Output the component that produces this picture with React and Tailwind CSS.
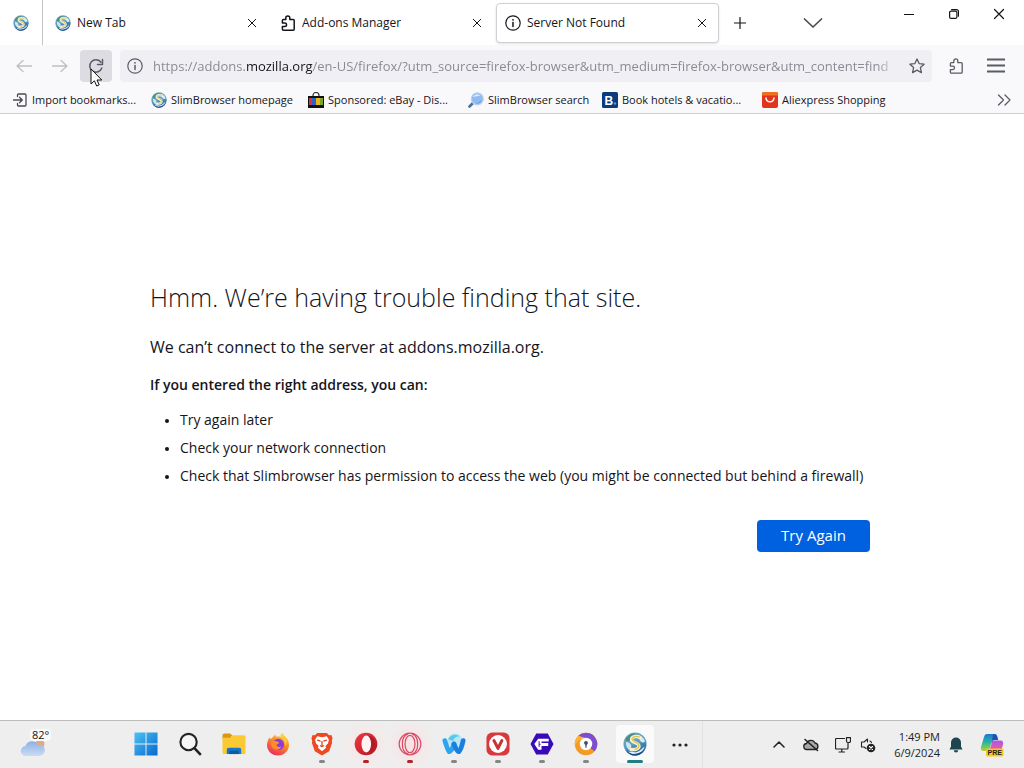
import React from "react";

const stroke = { fill: "none", stroke: "currentColor", strokeLinecap: "round", strokeLinejoin: "round" };

function Globe({ className, id }) {
  return (
    <svg className={className} viewBox="0 0 24 24" aria-hidden="true">
      <defs>
        <linearGradient id={id} x1="0.2" y1="0" x2="0.6" y2="1">
          <stop offset="0" stopColor="#6fa9b8" />
          <stop offset="0.5" stopColor="#5d9fc4" />
          <stop offset="1" stopColor="#1d5590" />
        </linearGradient>
      </defs>
      <circle cx="12" cy="12" r="11.500" fill={`url(#${id})`} />
      <path d="M2.500 8C4 4 8 1.500 12 1.500 11.500 4 8 5 7 7.500S4 9 2.500 8z" fill="#4a8d7d" />
      <path d="M15 3c3 .5 6 3 7 6.500-2 2-4 .5-5-1s-2-3-2-5.500z" fill="#d7ebf2" />
      <path d="M3 10c2 0 4 1 5 3s-1 4-2 5c-2-2-3.500-5-3-8z" fill="#cfe5f1" />
      <path d="M16 13c2-2 4-1.500 6-1 0 3-1.500 5.500-3.500 7.500-1.500-1-3-4-2.500-6.500z" fill="#3d83a8" />
      <path d="M5 20c5-1 6 1 9 0s5-3 7.500-5.500c-1 5-5 8-9.500 8-3 0-5-1-7-2.500z" fill="#e6f1f8" />
      <path d="M3 18c4 4 7 4.500 11 3.500 3-.8 5-2 7-4.500-2 4.500-5.500 6.500-9 6.500-4 0-7-2-9-5.500z" fill="#164a86" />
      <path d="M17 5.500c-3-1.500-8.500-1.500-8.500 2 0 3.500 7.500 3 7.500 6.500 0 3-4 4-8 3.500" fill="none" stroke="#f6f2d2" strokeWidth="3.400" strokeLinecap="round" />
      <path d="M16.500 5c-3-1-7.500-.5-7.500 2.200 0 3 7.500 3 7 6.800-.3 2-2 3-4 3.300" fill="none" stroke="#e0c555" strokeWidth="1.300" strokeLinecap="round" />
    </svg>
  );
}

function Puzzle({ className, width = 1.5 }) {
  return (
    <svg className={className} viewBox="0 0 16 16" {...stroke} strokeWidth={width} aria-hidden="true">
      <path d="M5.800 4.600V2.900a2 2 0 0 1 4 0v1.700h3.400a1 1 0 0 1 1 1v8.600a1 1 0 0 1-1 1H3.400a1 1 0 0 1-1-1v-2.600h2.400a1.700 1.700 0 0 0 0-3.500H2.400V5.600a1 1 0 0 1 1-1z" />
    </svg>
  );
}

function Info({ className }) {
  return (
    <svg className={className} viewBox="0 0 16 16" {...stroke} strokeWidth="1.200" aria-hidden="true">
      <circle cx="8" cy="8" r="7.200" />
      <path d="M8 7.500v4" strokeWidth="1.500" />
      <circle cx="8" cy="4.800" r="0.900" fill="currentColor" stroke="none" />
    </svg>
  );
}

function Cross({ className }) {
  return (
    <svg className={className} viewBox="0 0 12 12" {...stroke} strokeWidth="1.200" aria-hidden="true">
      <path d="M1.500 1.500l9 9M10.500 1.500l-9 9" />
    </svg>
  );
}

function Tab({ icon, title, active }) {
  return (
    <div
      className={
        "flex h-10 w-[223px] min-w-0 items-center rounded pl-2 pr-[10px] text-[#15141a] " +
        (active ? "border border-[#d0d0d4] bg-white shadow-sm" : "border border-transparent")
      }
    >
      <button type="button" role="tab" aria-selected={!!active} className="flex h-full min-w-0 flex-1 items-center gap-[6px] text-left text-[12px]">
        {icon}
        <span className="truncate">{title}</span>
      </button>
      <button type="button" aria-label={`Close ${title}`} className="flex size-3 items-center justify-center">
        <Cross className="size-[10px]" />
      </button>
    </div>
  );
}

const bookmarks = [
  {
    label: "Import bookmarks...",
    width: "w-[139px]",
    icon: (
      <svg className="size-4 shrink-0 text-[#4a4a52]" viewBox="0 0 16 16" {...stroke} strokeWidth="1.300" aria-hidden="true">
        <path d="M5.500 4.500V3a1 1 0 0 1 1-1h6.500a1 1 0 0 1 1 1v10a1 1 0 0 1-1 1H6.500a1 1 0 0 1-1-1v-1.500M1.500 8H10M7.500 5.200L10.300 8l-2.800 2.800" />
      </svg>
    ),
  },
  { label: "SlimBrowser homepage", width: "w-[157px]", icon: <Globe id="bm-globe" className="size-4 shrink-0" /> },
  {
    label: "Sponsored: eBay - Dis...",
    width: "w-[160px]",
    icon: (
      <svg className="size-4 shrink-0" viewBox="0 0 16 16" aria-hidden="true">
        <path d="M5 5V3.500a3 3 0 0 1 6 0V5" fill="none" stroke="#333" strokeWidth="1.200" />
        <path d="M0 4h16v12H0z" fill="#111" />
        <path d="M1 6h3v7H1z" fill="#d8323a" />
        <path d="M4 6h4v7H4z" fill="#2b62c9" />
        <path d="M8 6h4v7H8z" fill="#e9b41c" />
        <path d="M12 6h3v7h-3z" fill="#7aa52c" />
      </svg>
    ),
  },
  {
    label: "SlimBrowser search",
    width: "w-[134px]",
    icon: (
      <svg className="size-4 shrink-0" viewBox="0 0 16 16" aria-hidden="true">
        <path d="M1.500 14.500l4-4" stroke="#4a6f9c" strokeWidth="2.600" strokeLinecap="round" />
        <circle cx="9.300" cy="6.800" r="6" fill="#8fbcf0" stroke="#b9d0ee" strokeWidth="1.200" />
        <path d="M5 5c1-2.500 5-3.500 7.500-1.500-3 .2-5 1-7.500 1.500z" fill="#e6f1fd" />
        <path d="M13.500 8c-.5 2.500-3 4-5.500 3.500 2.500-.5 4-1.500 5.500-3.500z" fill="#4d86d8" />
      </svg>
    ),
  },
  {
    label: "Book hotels & vacatio...",
    width: "w-[160px]",
    icon: (
      <svg className="size-4 shrink-0" viewBox="0 0 16 16" aria-hidden="true">
        <rect width="16" height="16" rx="1.500" fill="#0c3b7c" />
        <text x="2.500" y="12.500" fontSize="12" fontWeight="700" fill="#fff" fontFamily="Liberation Sans, sans-serif">B</text>
        <circle cx="13" cy="11.500" r="1.200" fill="#35a8e8" />
      </svg>
    ),
  },
  {
    label: "Aliexpress Shopping",
    width: "w-[140px]",
    icon: (
      <svg className="size-4 shrink-0" viewBox="0 0 16 16" aria-hidden="true">
        <rect width="16" height="16" rx="2" fill="#e2341d" />
        <path d="M0 2a2 2 0 0 1 2-2h12a2 2 0 0 1 2 2v1.500H0z" fill="#f0701f" />
        <path d="M4 6c.5 5 7.500 5 8 0" fill="none" stroke="#fff" strokeWidth="1.500" strokeLinecap="round" />
      </svg>
    ),
  },
];

const taskApps = [
  {
    name: "Start",
    art: (
      <>
        <defs>
          <linearGradient id="win" x1="0" y1="0" x2="1" y2="1">
            <stop offset="0" stopColor="#4cc2f5" />
            <stop offset="1" stopColor="#0668cf" />
          </linearGradient>
        </defs>
        <path d="M0 0h11.500v11.500H0zM12.500 0H24v11.500H12.500zM0 12.500h11.500V24H0zM12.500 12.500H24V24H12.500z" fill="url(#win)" />
      </>
    ),
  },
  {
    name: "Search",
    art: (
      <>
        <circle cx="10.500" cy="10" r="8.500" fill="#f6f6f6" stroke="#242424" strokeWidth="2.200" />
        <path d="M16.800 16.500l5.700 6" stroke="#242424" strokeWidth="2.800" strokeLinecap="round" />
      </>
    ),
  },
  {
    name: "File Explorer",
    art: (
      <>
        <path d="M0 3a2 2 0 0 1 2-2h6l3 3h-2L8 7H0z" fill="#dd960f" />
        <path d="M0 5.500h8L10.500 3H22a2 2 0 0 1 2 2v16a1.500 1.500 0 0 1-1.500 1.500h-21A1.500 1.500 0 0 1 0 21z" fill="#fbc934" />
        <path d="M4.500 22.500V18a2 2 0 0 1 2-2h11a2 2 0 0 1 2 2v4.500z" fill="#1777c8" />
        <path d="M7 19h10v3.500H7z" fill="#125a9e" />
      </>
    ),
  },
  {
    name: "Firefox",
    art: (
      <>
        <defs>
          <linearGradient id="fx" x1="0.800" y1="0" x2="0.300" y2="1">
            <stop offset="0" stopColor="#ffdc3e" />
            <stop offset="0.450" stopColor="#ff8a23" />
            <stop offset="1" stopColor="#ea2a64" />
          </linearGradient>
        </defs>
        <path d="M3 5c.5 1 1 1.500 1.800 1.900C6.500 4 8 4.500 8.500 2c1 1 1.500 2 2 2.500 2-.5 4 0 4.500.5-.5-2 .2-3.500 1.500-4.500 1 3 6.500 4.500 7 12C23.500 19 18.500 24 12 24S.5 19 .5 13C.5 10 2 7.500 3 5z" fill="url(#fx)" />
        <circle cx="12.300" cy="12.500" r="6" fill="#8b3be0" />
        <path d="M5 10c2-2 4-1.500 5.500-.5 1.500 0 2.500.5 2.500 1.500s-2 1-2.500 2c.5 2 3 2.500 5 1.500-1 3-5 4.500-8 2.500-2.500-2-3.200-4.500-2.500-7z" fill="#ff8d2a" />
        <path d="M15 5c3 2 5 5 4.500 9 2-2 2-5 .5-7.500-1.500-2-2.500-3-3.500-6-1.300 1-2 2.500-1.500 4.500z" fill="#ffcf3b" />
      </>
    ),
  },
  {
    name: "Brave",
    line: "w-[6px] bg-[#858585]",
    art: (
      <>
        <path d="M7 .5h10L19.500 3l2.300-.3L23 6l-.8 3 .3 2-3 8.500L12 24l-7.500-4.500-3-8.500.3-2L1 6l1.200-3.300L4.500 3z" fill="#ee4a21" />
        <path d="M12 5l5-1 2.200 3.500-1 4-2.700 2.500.8 2L12 19.500 7.700 16l.8-2-2.700-2.500-1-4L7 4z" fill="#fff" />
        <path d="M7 8l3.500 1M17 8l-3.500 1M12 9v4.500M10 13.500l2 1.200 2-1.200" fill="none" stroke="#d9441f" strokeWidth="1.300" />
      </>
    ),
  },
  {
    name: "Opera",
    line: "w-[6px] bg-[#b32323]",
    tint: "bg-[radial-gradient(circle,#fbe4e6,transparent_80%)]",
    art: (
      <>
        <defs>
          <linearGradient id="op" x1="0" y1="0" x2="1" y2="1">
            <stop offset="0" stopColor="#ee3a45" />
            <stop offset="0.600" stopColor="#cf2230" />
            <stop offset="1" stopColor="#a81824" />
          </linearGradient>
        </defs>
        <circle cx="12" cy="12" r="11.800" fill="url(#op)" />
        <path d="M14 3.300c6 .5 7.500 4.500 7.500 8.700s-1.500 8.200-7.500 8.700z" fill="#b31b28" />
        <ellipse cx="12.300" cy="12" rx="5" ry="8.800" fill="#fff3f3" />
      </>
    ),
  },
  {
    name: "Opera GX",
    line: "w-[6px] bg-[#b32323]",
    tint: "bg-[radial-gradient(circle,#fbe0e4,transparent_80%)]",
    art: (
      <g fill="none" stroke="#d84e66" strokeWidth="1.300">
        <circle cx="12" cy="12" r="11.300" />
        <ellipse cx="12" cy="12" rx="5.200" ry="9" />
        <path d="M10 1.500C2 4 2 20 10 22.500M14 1.500c8 2.500 8 18.500 0 21" />
      </g>
    ),
  },
  {
    name: "WaveBrowser",
    line: "w-[6px] bg-[#858585]",
    art: (
      <>
        <circle cx="13" cy="8.500" r="7.500" fill="#b4e8f6" />
        <path d="M6 7c2-5 8-6 12-3-4 0-6 2-7 5z" fill="#58c9ec" />
        <path d="M2.500 8.500c1.500 5 2.500 9 4.500 11.500 2.500-1 4-4.500 5-8" fill="none" stroke="#2ba6ee" strokeWidth="5" strokeLinecap="round" strokeLinejoin="round" />
        <path d="M12 12c1.500 4 2.500 7 5 8 2.500-2.500 3.500-6.500 4.500-11.500" fill="none" stroke="#1b7fe0" strokeWidth="5" strokeLinecap="round" strokeLinejoin="round" />
      </>
    ),
  },
  {
    name: "Vivaldi",
    line: "w-[6px] bg-[#858585]",
    art: (
      <>
        <rect width="24" height="24" rx="6" fill="#d9383c" />
        <circle cx="12" cy="12" r="9.300" fill="#fff" />
        <path d="M7.800 8.500l4.200 8 4-8" fill="none" stroke="#c93338" strokeWidth="3.200" strokeLinecap="round" strokeLinejoin="round" />
      </>
    ),
  },
  {
    name: "Floorp",
    line: "w-[6px] bg-[#858585]",
    art: (
      <>
        <path d="M6 1h12l6 11-6 11H6L0 12z" fill="#3809b8" />
        <path d="M19 6.500H8L4 12l4 6h3.500v-4h7v-3h-7V9.500H19z" fill="#fff" />
        <path d="M9 12.300h1.500M9 9v6" stroke="#3809b8" strokeWidth="1" />
      </>
    ),
  },
  {
    name: "Avast Secure Browser",
    line: "w-[6px] bg-[#858585]",
    art: (
      <>
        <circle cx="12" cy="12" r="11.700" fill="#f59a23" />
        <path d="M12 .3A11.700 11.700 0 0 1 21 19.500L16 16c3-4 1-9-4-9-4 0-7-1-8-3.500A11.700 11.700 0 0 1 12 .3z" fill="#7d4fd0" />
        <path d="M4 3.500A11.700 11.700 0 0 0 .5 14c2-4 4-7 11.500-8z" fill="#fbb33c" />
        <circle cx="12" cy="12" r="6.500" fill="#fff" />
        <circle cx="12" cy="10.800" r="2" fill="#3f4b6a" />
        <path d="M11 11h2l-.5 5h-1z" fill="#3f4b6a" />
      </>
    ),
  },
];

export default function App() {
  return (
    <div className="flex min-h-screen flex-col bg-white font-['Open_Sans','Noto_Sans',sans-serif] text-[#15141a]">
      <header>
        <div className="flex h-[45px] bg-white">
          <button type="button" aria-label="Pinned tab" className="flex w-[43px] shrink-0 items-center justify-center border-r border-[#c4c4c8]">
            <Globe id="pin-globe" className="size-4" />
          </button>
          <div role="tablist" aria-label="Tabs" className="flex min-w-0 items-center gap-[2px] pl-[3px]">
            <Tab title="New Tab" icon={<Globe id="tab-globe" className="size-4 shrink-0" />} />
            <Tab title="Add-ons Manager" icon={<Puzzle className="size-4 shrink-0" />} />
            <Tab title="Server Not Found" active icon={<Info className="size-4 shrink-0" />} />
          </div>
          <button type="button" aria-label="New tab" className="flex w-[42px] shrink-0 items-center justify-center">
            <svg className="size-3" viewBox="0 0 12 12" {...stroke} strokeWidth="1.200" aria-hidden="true">
              <path d="M6 .5v11M.5 6h11" />
            </svg>
          </button>
          <button type="button" aria-label="List all tabs" className="ml-8 flex w-10 shrink-0 items-center justify-center text-[#4a4a52]">
            <svg className="h-[10px] w-5" viewBox="0 0 20 10" {...stroke} strokeWidth="1.700" aria-hidden="true">
              <path d="M1.500 1L10 9l8.500-8" />
            </svg>
          </button>
          <div className="ml-auto flex h-7 shrink-0 pr-[3px]">
            <button type="button" aria-label="Minimize" className="flex w-[45px] items-center justify-center">
              <svg className="size-[10px]" viewBox="0 0 10 10" aria-hidden="true">
                <path d="M0 5.500h10" stroke="#111" />
              </svg>
            </button>
            <button type="button" aria-label="Restore" className="flex w-[45px] items-center justify-center">
              <svg className="size-[10px]" viewBox="0 0 10 10" {...stroke} strokeWidth="1.200" aria-hidden="true">
                <rect x="0.600" y="2.100" width="7.300" height="7.300" rx="1.500" />
                <path d="M2.600.6H7.500a2 2 0 0 1 2 2v4.600" />
              </svg>
            </button>
            <button type="button" aria-label="Close window" className="flex w-[45px] items-center justify-center">
              <Cross className="size-3" />
            </button>
          </div>
        </div>

        <div className="flex h-[42px] items-center bg-[#f9f9fb] pl-2 pr-3">
          <button type="button" aria-label="Back" className="flex h-8 w-8 items-center justify-center text-[#bfbfc4]">
            <svg className="size-4" viewBox="0 0 16 16" {...stroke} strokeWidth="1.300" aria-hidden="true">
              <path d="M15.500 8H1M7 2.500L1 8l6 5.500" />
            </svg>
          </button>
          <button type="button" aria-label="Forward" className="ml-1 flex h-8 w-8 items-center justify-center text-[#bfbfc4]">
            <svg className="size-4" viewBox="0 0 16 16" {...stroke} strokeWidth="1.300" aria-hidden="true">
              <path d="M.5 8H15M9 2.500L15 8l-6 5.500" />
            </svg>
          </button>
          <button type="button" aria-label="Reload" className="relative ml-1 flex h-8 w-8 items-center justify-center rounded bg-[#dcdce2] text-[#5b5b66]">
            <svg className="size-4" viewBox="0 0 16 16" {...stroke} strokeWidth="1.500" aria-hidden="true">
              <path d="M13.800 10A6.200 6.200 0 1 1 13 4.300" />
              <path d="M14.500 1.500v5H9.500" />
            </svg>
            <svg className="absolute left-[10px] top-[18px] h-5 w-[13px]" viewBox="0 0 13 20" aria-hidden="true">
              <path d="M1 1v15l3.400-3.200L6.700 18l2.500-1.100L7 12h4.800z" fill="#fff" stroke="#111" strokeLinejoin="round" />
            </svg>
          </button>
          <div className="ml-2 flex h-8 min-w-0 flex-1 items-center rounded bg-[#f0f0f4] px-[7px]">
            <button type="button" aria-label="Site information" className="text-[#5b5b66]">
              <Info className="size-4" />
            </button>
            <div className="ml-[10px] grid min-w-0 flex-1 text-[13px] leading-5 [mask-image:linear-gradient(to_left,transparent,black_20px)]">
              <input
                aria-label="Address"
                defaultValue="https://addons.mozilla.org/en-US/firefox/"
                className="col-start-1 row-start-1 w-full bg-transparent text-transparent caret-black outline-none"
              />
              <span className="pointer-events-none col-start-1 row-start-1 min-w-0 whitespace-nowrap text-[#8b8b94]">
                https://addons.<span className="text-[#15141a]">mozilla.org</span>
                /en-US/firefox/?utm_source=firefox-browser&amp;utm_medium=firefox-browser&amp;utm_content=find
              </span>
            </div>
            <button type="button" aria-label="Bookmark this page" className="ml-3 text-[#5b5b66]">
              <svg className="size-4" viewBox="0 0 16 16" {...stroke} strokeWidth="1.300" aria-hidden="true">
                <path d="M8 1l2.100 4.600 5 .6-3.700 3.400 1 5L8 12.100l-4.400 2.500 1-5L.9 6.200l5-.6z" />
              </svg>
            </button>
          </div>
          <button type="button" aria-label="Extensions" className="ml-2 flex h-8 w-8 items-center justify-center text-[#5b5b66]">
            <Puzzle className="size-4" width={1.3} />
          </button>
          <button type="button" aria-label="Open application menu" className="ml-2 flex h-8 w-8 items-center justify-center text-[#5b5b66]">
            <svg className="h-4 w-[18px]" viewBox="0 0 18 16" aria-hidden="true">
              <path d="M0 1.500h18M0 7.500h18M0 13.500h18" stroke="currentColor" strokeWidth="1.800" />
            </svg>
          </button>
        </div>

        <nav aria-label="Bookmarks" className="flex h-[27px] items-center border-b border-[#cfcfd3] bg-[#f9f9fb] pl-3 pr-[13px]">
          {bookmarks.map((b) => (
            <a key={b.label} href="#" className={"flex shrink-0 items-center gap-1 whitespace-nowrap text-[11px] " + b.width}>
              {b.icon}
              {b.label}
            </a>
          ))}
          <button type="button" aria-label="More bookmarks" className="ml-auto text-[#5b5b66]">
            <svg className="h-3 w-[14px]" viewBox="0 0 14 12" {...stroke} strokeWidth="1.300" aria-hidden="true">
              <path d="M1.500 1l5 5-5 5M8 1l5 5-5 5" />
            </svg>
          </button>
        </nav>
      </header>

      <main className="flex flex-1 flex-col justify-center px-4 pb-1">
        <div className="mx-auto w-full max-w-[724px]">
          <h1 className="text-[25px] font-light leading-9">Hmm. We’re having trouble finding that site.</h1>
          <p className="mt-5 text-[16px] leading-6">We can’t connect to the server at addons.mozilla.org.</p>
          <p className="mt-4 text-[14px] font-semibold leading-5">If you entered the right address, you can:</p>
          <ul className="mt-[11px] list-disc pl-[30px] text-[14px] leading-7 marker:text-[11px]">
            <li>Try again later</li>
            <li>Check your network connection</li>
            <li>Check that Slimbrowser has permission to access the web (you might be connected but behind a firewall)</li>
          </ul>
          <div className="mt-[30px] flex justify-end pr-1">
            <button type="button" className="h-8 w-[113px] rounded bg-[#0061e0] text-[15px] text-white">
              Try Again
            </button>
          </div>
        </div>
      </main>

      <footer className="flex h-12 items-stretch border-t border-[#bdbdbd] bg-[#eeeeee]">
        <button type="button" aria-label="Weather" className="flex w-[124px] shrink-0 items-center pl-5">
          <svg className="mt-[6px] h-[18px] w-[26px]" viewBox="0 0 26 18" aria-hidden="true">
            <defs>
              <linearGradient id="cloud" x1="0" y1="0" x2="0" y2="1">
                <stop offset="0" stopColor="#8fb0e2" />
                <stop offset="1" stopColor="#c9dcf4" />
              </linearGradient>
            </defs>
            <circle cx="20" cy="5" r="4.500" fill="#e7a77f" />
            <path d="M6 17a5 5 0 0 1-.5-10A7 7 0 0 1 18 5.500 5.800 5.800 0 0 1 20 17z" fill="url(#cloud)" />
          </svg>
          <span className="-ml-4 mb-5 rounded bg-[#fafafa] px-[2px] text-[11px] leading-3">82°</span>
        </button>
        <div className="flex items-stretch border-r border-[#e2e2e2]">
          {taskApps.map((app) => (
            <button key={app.name} type="button" aria-label={app.name} className={"flex w-11 flex-col items-center pt-[11px] " + (app.tint || "")}>
              <svg className="h-6 w-6 shrink-0" viewBox="-0.500 -0.500 25 25" aria-hidden="true">{app.art}</svg>
              {app.line && <span className={"mt-1 h-[3px] rounded-full " + app.line} />}
            </button>
          ))}
          <button type="button" aria-label="SlimBrowser" className="ml-2 mt-1 flex h-[38px] w-[38px] flex-col items-center rounded bg-[#fafafa] pt-[7px]">
            <Globe id="task-globe" className="size-6 shrink-0" />
            <span className="mt-1 h-[3px] w-4 rounded-full bg-[#1f7f80]" />
          </button>
          <button type="button" aria-label="More apps" className="ml-1 flex w-11 items-center justify-center">
            <svg className="h-1 w-4" viewBox="0 0 16 4" aria-hidden="true">
              <circle cx="2" cy="2" r="1.600" fill="#222" />
              <circle cx="8" cy="2" r="1.600" fill="#222" />
              <circle cx="14" cy="2" r="1.600" fill="#222" />
            </svg>
          </button>
        </div>
        <div className="ml-auto flex items-center pr-5 text-[#222]">
          <button type="button" aria-label="Show hidden icons" className="flex w-6 justify-center">
            <svg className="h-[7px] w-3" viewBox="0 0 12 7" {...stroke} strokeWidth="1.500" aria-hidden="true">
              <path d="M1 6l5-5 5 5" />
            </svg>
          </button>
          <button type="button" aria-label="Cloud storage" className="ml-3 flex w-4 justify-center">
            <svg className="h-[14px] w-4" viewBox="0 0 16 14" {...stroke} strokeWidth="1.300" aria-hidden="true">
              <path d="M4 11.500a3 3 0 0 1-.4-6A4.500 4.500 0 0 1 12 5a3.300 3.300 0 0 1 .3 6.500z" fill="#a8a8a8" />
              <path d="M2 1.500l12.500 11" strokeWidth="1.600" />
            </svg>
          </button>
          <button type="button" aria-label="Network" className="ml-4 flex w-4 justify-center">
            <svg className="size-4" viewBox="0 0 16 16" {...stroke} strokeWidth="1.200" aria-hidden="true">
              <path d="M9.500 1.500h-8a1 1 0 0 0-1 1V11a1 1 0 0 0 1 1H12a1 1 0 0 0 1-1V7M4 15h5.500M6.800 12v3M11.500.6h4V4a1.500 1.500 0 0 1-1.500 1.500h-1A1.500 1.500 0 0 1 11.500 4zM13 5.500V8" />
            </svg>
          </button>
          <button type="button" aria-label="Volume" className="ml-[9px] flex w-4 justify-center">
            <svg className="size-4" viewBox="0 0 16 16" {...stroke} strokeWidth="1.100" aria-hidden="true">
              <path d="M7.500 5V2L4 5H1.500v5H4l2 1.500M10 4a3 3 0 0 1 1.500 1.500" />
              <circle cx="11" cy="11" r="4.300" fill="#222" stroke="none" />
              <path d="M9.500 9.500l3 3M12.500 9.500l-3 3" stroke="#fff" />
            </svg>
          </button>
          <button type="button" className="w-16 text-right text-[11px] leading-4">
            <span className="block">1:49 PM</span>
            <span className="block">6/9/2024</span>
          </button>
          <button type="button" aria-label="Notifications" className="ml-2 flex w-4 justify-center">
            <svg className="h-4 w-[14px]" viewBox="0 0 14 16" aria-hidden="true">
              <path d="M7 .5a5 5 0 0 1 5 5V9.500l1.500 3H.5l1.500-3V5.500a5 5 0 0 1 5-5zM4.800 13.300h4.400a2.200 2.200 0 0 1-4.400 0z" fill="#1d4650" />
            </svg>
          </button>
          <button type="button" aria-label="Copilot" className="ml-4 flex w-6 justify-center">
            <svg className="size-6" viewBox="0 0 24 24" aria-hidden="true">
              <defs>
                <linearGradient id="cpa" x1="0" y1="0" x2="0" y2="1">
                  <stop offset="0" stopColor="#1f74d8" />
                  <stop offset="0.500" stopColor="#2ab89a" />
                  <stop offset="1" stopColor="#b7cf34" />
                </linearGradient>
                <linearGradient id="cpb" x1="0" y1="0" x2="0" y2="1">
                  <stop offset="0" stopColor="#a35ae8" />
                  <stop offset="0.600" stopColor="#ee5a9c" />
                  <stop offset="1" stopColor="#f6903c" />
                </linearGradient>
              </defs>
              <path d="M7 1h7.500c2 0 2.500 1 3 3l.8 3h-4c-2 0-2.500 1-3 3l-1.500 5c-.5 2-1.500 3-3 3H3.500C1 18 .5 16 1 14L4 4c.5-2 1.500-3 3-3z" fill="url(#cpa)" />
              <path d="M11 7.500h9.500c2.500 0 3 2 2.500 4l-2 7c-.5 2-1.500 3.500-3.500 3.500H10c-1.500 0-1.500-1-1-3l2.500-8z" fill="url(#cpb)" />
              <path d="M13 1c3 0 4 1 5 6h-4c-1 0-1.500.5-2 1.500z" fill="#244fb0" />
              <rect x="6" y="15.500" width="17.500" height="8" rx="1.500" fill="#f7c91e" />
              <text x="14.800" y="22" textAnchor="middle" fontSize="7" fontWeight="700" fill="#222" fontFamily="Liberation Sans, sans-serif">PRE</text>
            </svg>
          </button>
        </div>
      </footer>
    </div>
  );
}
